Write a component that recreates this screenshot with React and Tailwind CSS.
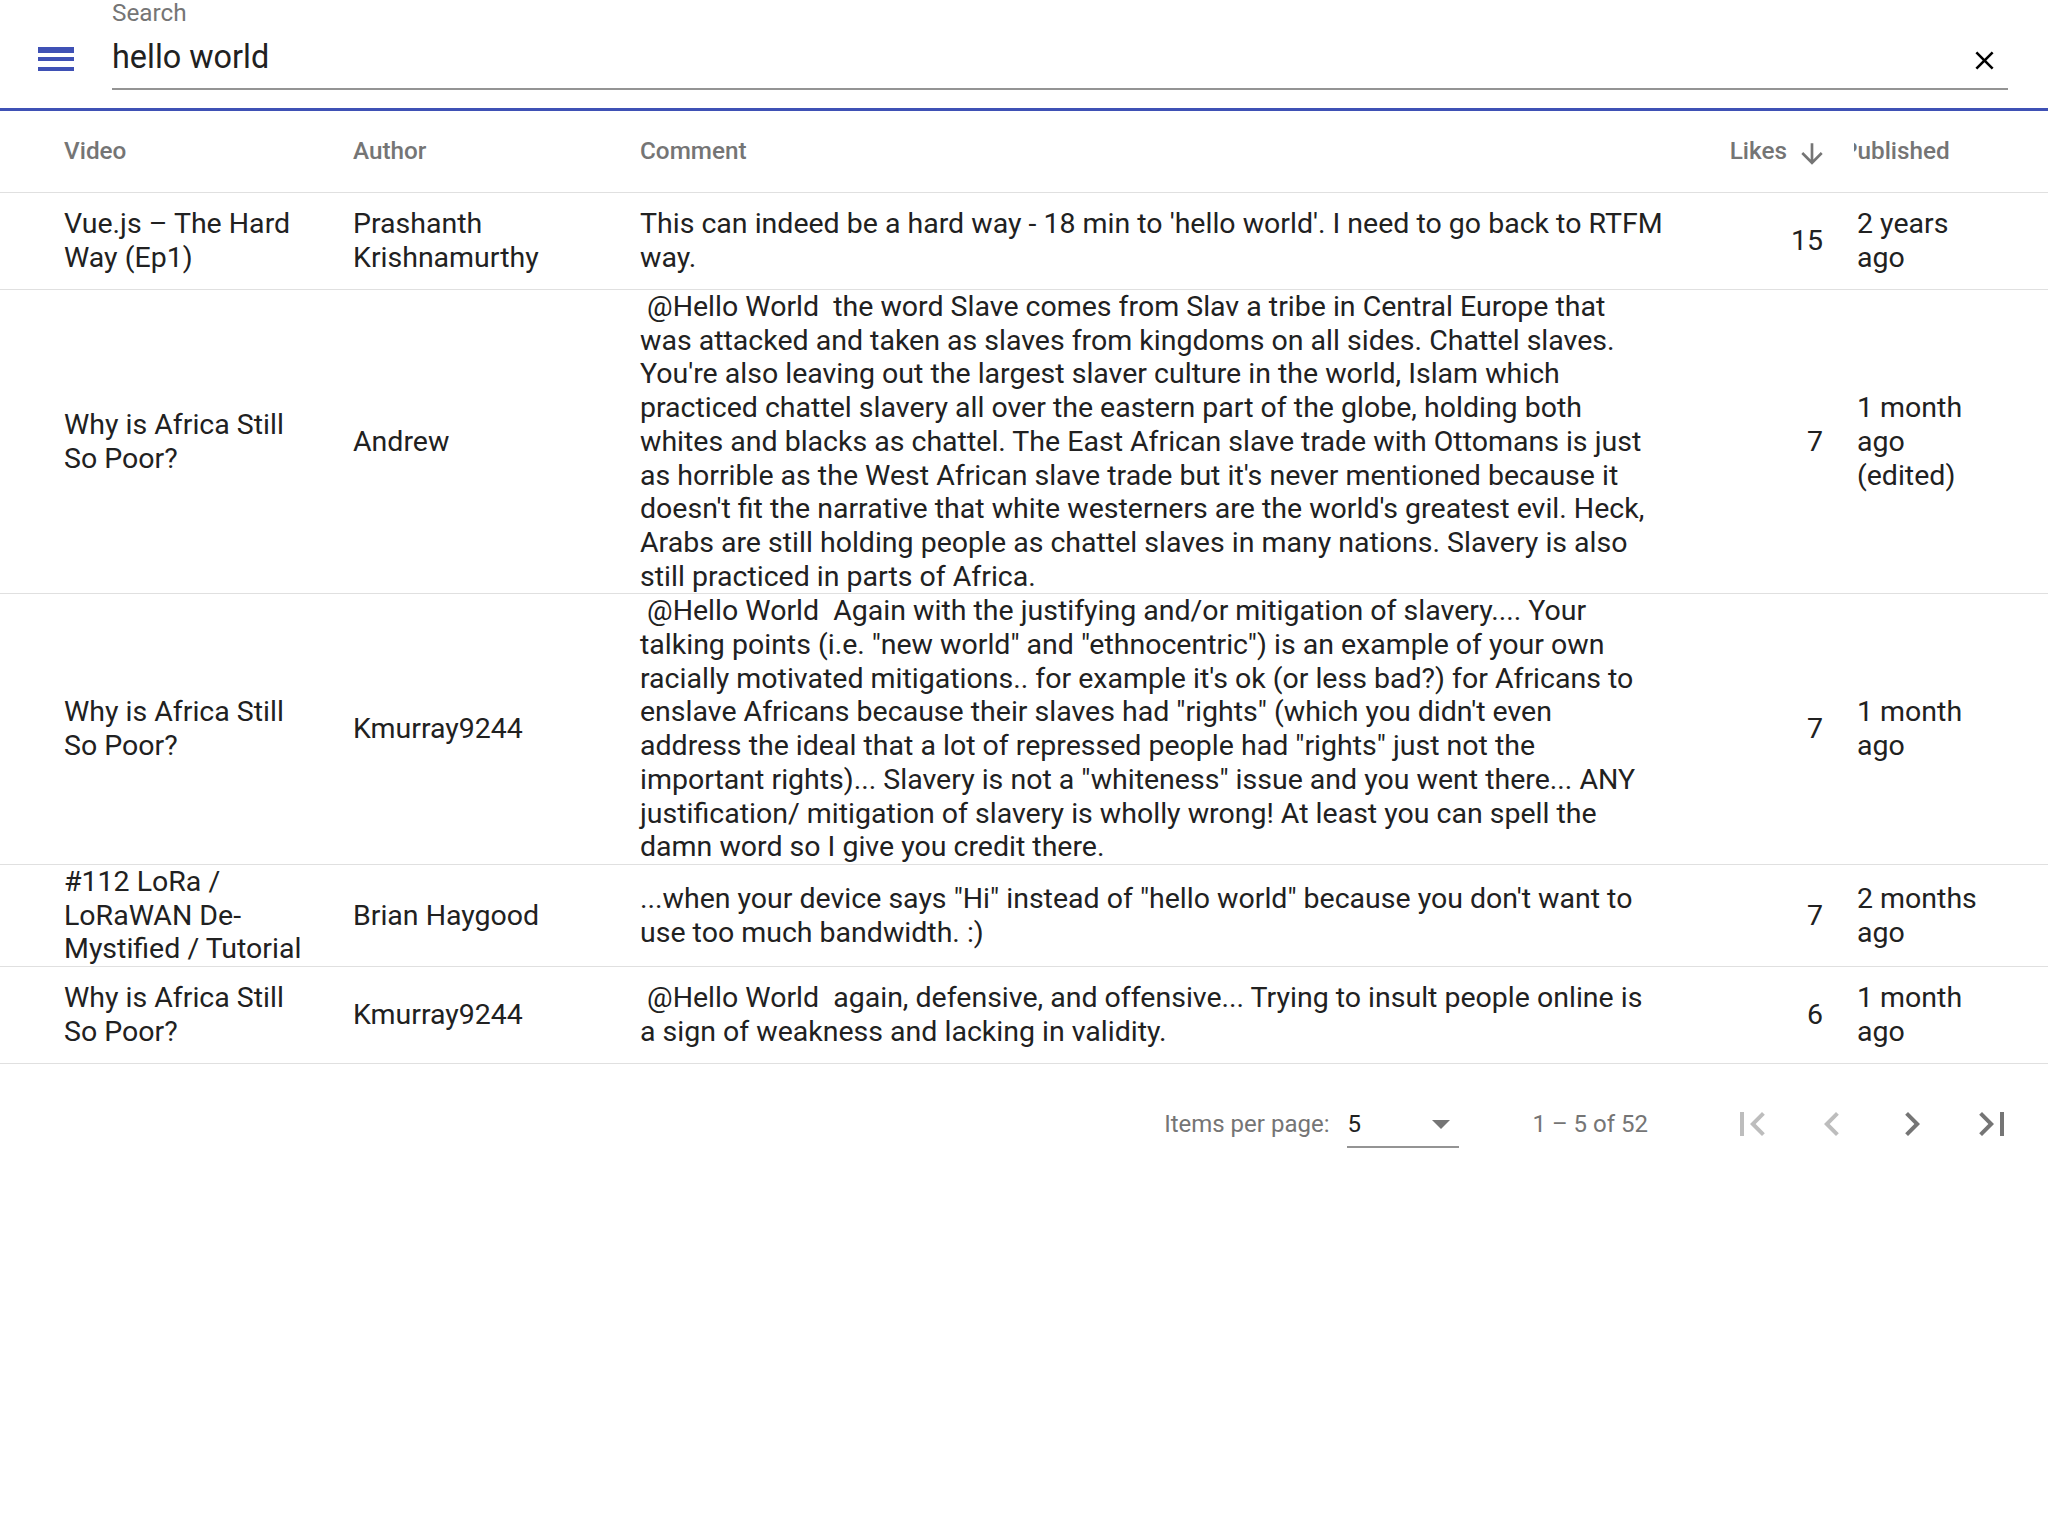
import { useState } from 'react';

// lines are broken where the reference breaks them
const rows = [
  {
    video: ['Vue.js – The Hard', 'Way (Ep1)'],
    author: ['Prashanth', 'Krishnamurthy'],
    comment: ["This can indeed be a hard way - 18 min to 'hello world'. I need to go back to RTFM", 'way.'],
    likes: 15,
    published: ['2 years', 'ago'],
  },
  {
    video: ['Why is Africa Still', 'So Poor?'],
    author: ['Andrew'],
    comment: [
      '\u00a0@Hello World\u00a0 the word Slave comes from Slav a tribe in Central Europe that',
      'was attacked and taken as slaves from kingdoms on all sides. Chattel slaves.',
      "You're also leaving out the largest slaver culture in the world, Islam which",
      'practiced chattel slavery all over the eastern part of the globe, holding both',
      'whites and blacks as chattel. The East African slave trade with Ottomans is just',
      "as horrible as the West African slave trade but it's never mentioned because it",
      "doesn't fit the narrative that white westerners are the world's greatest evil. Heck,",
      'Arabs are still holding people as chattel slaves in many nations. Slavery is also',
      'still practiced in parts of Africa.',
    ],
    likes: 7,
    published: ['1 month', 'ago', '(edited)'],
  },
  {
    video: ['Why is Africa Still', 'So Poor?'],
    author: ['Kmurray9244'],
    comment: [
      '\u00a0@Hello World\u00a0 Again with the justifying and/or mitigation of slavery.... Your',
      'talking points (i.e. "new world" and "ethnocentric") is an example of your own',
      "racially motivated mitigations.. for example it's ok (or less bad?) for Africans to",
      'enslave Africans because their slaves had "rights" (which you didn\'t even',
      'address the ideal that a lot of repressed people had "rights" just not the',
      'important rights)... Slavery is not a "whiteness" issue and you went there... ANY',
      'justification/ mitigation of slavery is wholly wrong! At least you can spell the',
      'damn word so I give you credit there.',
    ],
    likes: 7,
    published: ['1 month', 'ago'],
  },
  {
    video: ['#112 LoRa /', 'LoRaWAN De-', 'Mystified / Tutorial'],
    author: ['Brian Haygood'],
    comment: ['...when your device says "Hi" instead of "hello world" because you don\'t want to', 'use too much bandwidth. :)'],
    likes: 7,
    published: ['2 months', 'ago'],
  },
  {
    video: ['Why is Africa Still', 'So Poor?'],
    author: ['Kmurray9244'],
    comment: [
      '\u00a0@Hello World\u00a0 again, defensive, and offensive... Trying to insult people online is',
      'a sign of weakness and lacking in validity.',
    ],
    likes: 6,
    published: ['1 month', 'ago'],
  },
];

function Icon({ d, className }) {
  return (
    <svg viewBox="0 0 24 24" className={className} fill="currentColor">
      <path d={d} />
    </svg>
  );
}

function Lines({ lines }) {
  return lines.map((l, i) => (
    <span key={i} className="block whitespace-nowrap">
      {l}
    </span>
  ));
}

const MENU = 'M3 18h18v-2H3v2zm0-5h18v-2H3v2zm0-6v2h18V6H3z';
const CLOSE = 'M19 6.41L17.59 5 12 10.59 6.41 5 5 6.41 10.59 12 5 17.59 6.41 19 12 13.41 17.59 19 19 17.59 13.41 12z';
const ARROW_DOWN = 'M20 12l-1.41-1.41L13 16.17V4h-2v12.17l-5.58-5.59L4 12l8 8 8-8z';
const FIRST = 'M18.41 16.59L13.82 12l4.59-4.59L17 6l-6 6 6 6zM6 6h2v12H6z';
const PREV = 'M15.41 7.41L14 6l-6 6 6 6 1.41-1.41L10.83 12z';
const NEXT = 'M10 6L8.59 7.41 13.17 12l-4.58 4.59L10 18l6-6z';
const LAST = 'M5.59 7.41L10.18 12l-4.59 4.59L7 18l6-6-6-6zM16 6h2v12h-2z';

export default function App() {
  const [query, setQuery] = useState('hello world');

  return (
    <div className="min-h-screen w-[2048px] bg-white font-['Roboto',sans-serif] text-[#212121]">
      {/* search bar */}
      <header className="flex h-[111px] items-start border-b-[3px] border-[#3f51b5]">
        <Icon d={MENU} className="ml-[32px] mt-[35px] h-[48px] w-[48px] shrink-0 text-[#3f51b5]" />
        <div className="ml-[32px] mr-[40px] flex-1">
          <div className="text-[24.3px] leading-[26px] text-[#757575]">Search</div>
          <div className="mt-[13px] flex h-[37px] items-start">
            <input
              value={query}
              onChange={(e) => setQuery(e.target.value)}
              className="h-[37px] flex-1 bg-transparent text-[32.4px] leading-[37px] outline-none"
            />
            <Icon d={CLOSE} className="mr-[8px] mt-[6px] h-[31px] w-[31px] shrink-0 text-black" />
          </div>
          <div className="mt-[12px] h-[2px] bg-[#949494]" />
        </div>
      </header>

      {/* table */}
      <div className="flex h-[82px] items-center border-b border-[#e0e0e0] pl-[64px] text-[24.3px] font-medium text-[#757575]">
        <div className="mr-[48px] w-[241px]">Video</div>
        <div className="mr-[48px] w-[239px]">Author</div>
        <div className="mr-[75px] w-[1018px]">Comment</div>
        <div className="flex w-[90px] items-center justify-end">
          <span>Likes</span>
          <Icon d={ARROW_DOWN} className="-mr-[5px] ml-[9px] mt-[4px] h-[32px] w-[32px] shrink-0" />
        </div>
        <div className="ml-[31px] w-[130px] overflow-hidden whitespace-nowrap">
          <span className="-ml-[12px] block">Published</span>
        </div>
      </div>

      {rows.map((r, i) => (
        <div key={i} className="flex min-h-[97px] items-center border-b border-[#e0e0e0] pl-[64px] text-[28.5px] leading-[33.7px]">
          <div className="mr-[48px] w-[241px]">
            <Lines lines={r.video} />
          </div>
          <div className="mr-[48px] w-[239px]">
            <Lines lines={r.author} />
          </div>
          <div className="mr-[75px] w-[1018px]">
            <Lines lines={r.comment} />
          </div>
          <div className="w-[90px] text-right">{r.likes}</div>
          <div className="ml-[34px] w-[127px]">
            <Lines lines={r.published} />
          </div>
        </div>
      ))}

      {/* paginator */}
      <div className="flex h-[116px] items-center justify-end pr-[16px] pt-[4px] text-[24px] text-[#757575]">
        <span>Items per page:</span>
        <div className="ml-[18px] flex h-[48px] w-[112px] flex-col justify-end">
          <div className="flex items-center justify-between pb-[4px]">
            <span className="text-[#212121]">5</span>
            <span className="mr-[9px] h-0 w-0 border-x-[9px] border-t-[9px] border-x-transparent border-t-[#757575]" />
          </div>
          <div className="h-[2px] bg-[#949494]" />
        </div>
        <span className="ml-[73px] mr-[64px]">1 – 5 of 52</span>
        <button className="flex h-[80px] w-[80px] items-center justify-center text-[#bdbdbd]">
          <Icon d={FIRST} className="h-[48px] w-[48px]" />
        </button>
        <button className="flex h-[80px] w-[80px] items-center justify-center text-[#bdbdbd]">
          <Icon d={PREV} className="h-[48px] w-[48px]" />
        </button>
        <button className="flex h-[80px] w-[80px] items-center justify-center text-[#757575]">
          <Icon d={NEXT} className="h-[48px] w-[48px]" />
        </button>
        <button className="flex h-[80px] w-[80px] items-center justify-center text-[#757575]">
          <Icon d={LAST} className="h-[48px] w-[48px]" />
        </button>
      </div>
    </div>
  );
}
